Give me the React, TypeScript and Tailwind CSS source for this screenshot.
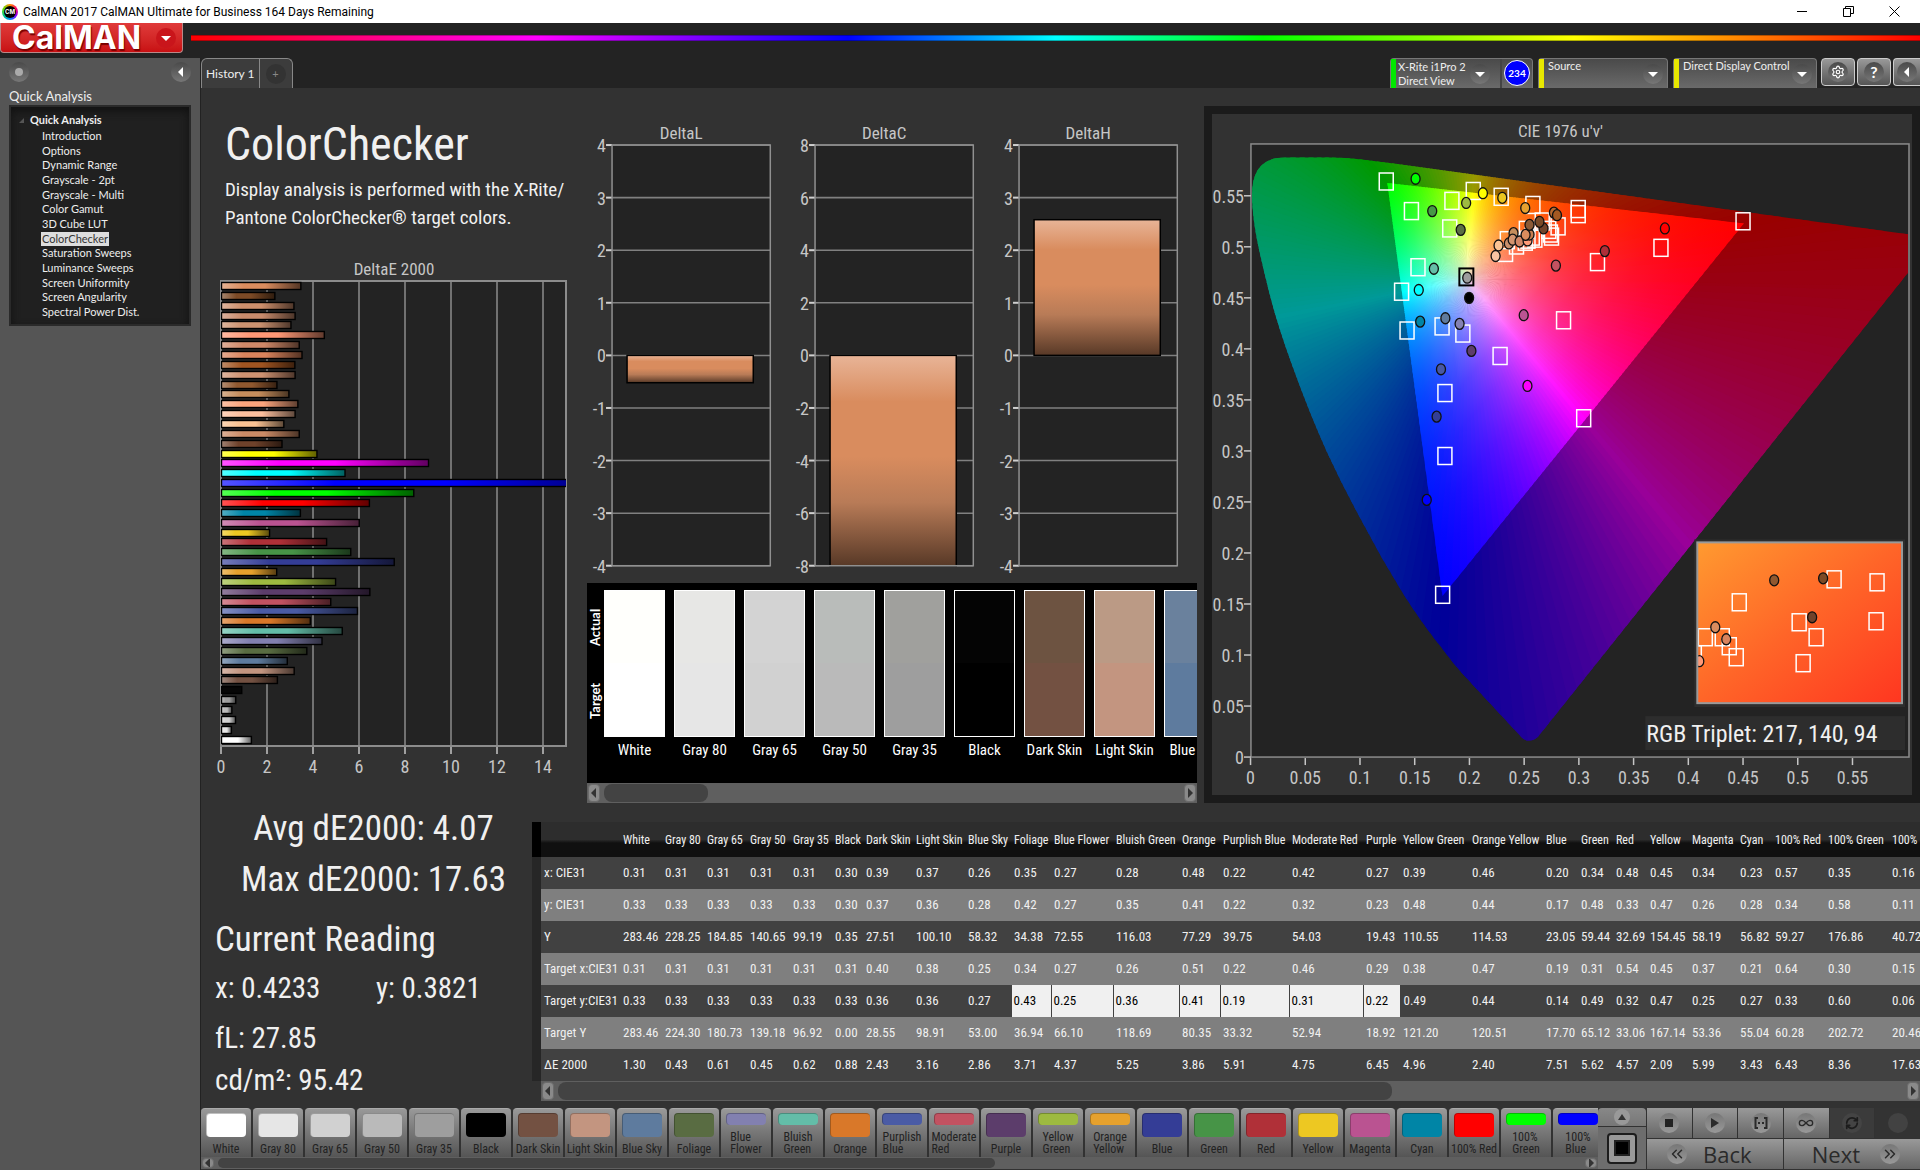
import { ChevronsLeft, ChevronsRight, Infinity as InfinityIcon, RefreshCw, Settings } from 'lucide-react'

interface Patch {
  name: string
  color: string
  actual?: string
  values: string[]
  width: number
}

const patches: Patch[] = [
  { name: 'White', color: '#ffffff', actual: '#fffffc', width: 42, values: ['0.31', '0.33', '283.46', '0.31', '0.33', '283.46', '1.30'] },
  { name: 'Gray 80', color: '#e6e6e6', actual: '#e7e7e5', width: 42, values: ['0.31', '0.33', '228.25', '0.31', '0.33', '224.30', '0.43'] },
  { name: 'Gray 65', color: '#d1d1d1', actual: '#d3d3d3', width: 43, values: ['0.31', '0.33', '184.85', '0.31', '0.33', '180.73', '0.61'] },
  { name: 'Gray 50', color: '#bababa', actual: '#b9bcba', width: 43, values: ['0.31', '0.33', '140.65', '0.31', '0.33', '139.18', '0.45'] },
  { name: 'Gray 35', color: '#9e9e9e', actual: '#a0a09d', width: 42, values: ['0.31', '0.33', '99.19', '0.31', '0.33', '96.92', '0.62'] },
  { name: 'Black', color: '#000000', actual: '#040404', width: 31, values: ['0.30', '0.30', '0.35', '0.31', '0.33', '0.00', '0.88'] },
  { name: 'Dark Skin', color: '#735142', actual: '#6d5341', width: 50, values: ['0.39', '0.37', '27.51', '0.40', '0.36', '28.55', '2.43'] },
  { name: 'Light Skin', color: '#c39580', actual: '#bb9a85', width: 52, values: ['0.37', '0.36', '100.10', '0.38', '0.36', '98.91', '3.16'] },
  { name: 'Blue Sky', color: '#5e7b9e', actual: '#6a819d', width: 46, values: ['0.26', '0.28', '58.32', '0.25', '0.27', '53.00', '2.86'] },
  { name: 'Foliage', color: '#596c42', width: 40, values: ['0.35', '0.42', '34.38', '0.34', '0.43', '36.94', '3.71'] },
  { name: 'Blue Flower', color: '#8280b0', width: 62, values: ['0.27', '0.27', '72.55', '0.27', '0.25', '66.10', '4.37'] },
  { name: 'Bluish Green', color: '#63bda8', width: 66, values: ['0.28', '0.35', '116.03', '0.26', '0.36', '118.69', '5.25'] },
  { name: 'Orange', color: '#d97829', width: 41, values: ['0.48', '0.41', '77.29', '0.51', '0.41', '80.35', '3.86'] },
  { name: 'Purplish Blue', color: '#4a5ba5', width: 69, values: ['0.22', '0.22', '39.75', '0.22', '0.19', '33.32', '5.91'] },
  { name: 'Moderate Red', color: '#c25261', width: 74, values: ['0.42', '0.32', '54.03', '0.46', '0.31', '52.94', '4.75'] },
  { name: 'Purple', color: '#5c3d6b', width: 37, values: ['0.27', '0.23', '19.43', '0.29', '0.22', '18.92', '6.45'] },
  { name: 'Yellow Green', color: '#9dba40', width: 69, values: ['0.39', '0.48', '110.55', '0.38', '0.49', '121.20', '4.96'] },
  { name: 'Orange Yellow', color: '#e6a12d', width: 74, values: ['0.46', '0.44', '114.53', '0.47', '0.44', '120.51', '2.40'] },
  { name: 'Blue', color: '#343d96', width: 35, values: ['0.20', '0.17', '23.05', '0.19', '0.14', '17.70', '7.51'] },
  { name: 'Green', color: '#479447', width: 35, values: ['0.34', '0.48', '59.44', '0.31', '0.49', '65.12', '5.62'] },
  { name: 'Red', color: '#b03038', width: 34, values: ['0.48', '0.33', '32.69', '0.54', '0.32', '33.06', '4.57'] },
  { name: 'Yellow', color: '#edc822', width: 42, values: ['0.45', '0.47', '154.45', '0.45', '0.47', '167.14', '2.09'] },
  { name: 'Magenta', color: '#ba5391', width: 48, values: ['0.34', '0.26', '58.19', '0.37', '0.25', '53.36', '5.99'] },
  { name: 'Cyan', color: '#0085a6', width: 35, values: ['0.23', '0.28', '56.82', '0.21', '0.27', '55.04', '3.43'] },
  { name: '100% Red', color: '#ff0000', width: 53, values: ['0.57', '0.34', '59.27', '0.64', '0.33', '60.28', '6.43'] },
  { name: '100% Green', color: '#00ff00', width: 64, values: ['0.35', '0.58', '176.86', '0.30', '0.60', '202.72', '8.36'] },
  { name: '100% Blue', color: '#0000ff', width: 60, values: ['0.16', '0.11', '40.72', '0.15', '0.06', '20.46', '17.63'] },
]

const rowLabels = ['x: CIE31', 'y: CIE31', 'Y', 'Target x:CIE31', 'Target y:CIE31', 'Target Y', 'ΔE 2000']
const twoLine = ['Blue Flower', 'Bluish Green', 'Purplish Blue', 'Moderate Red', 'Yellow Green', 'Orange Yellow', '100% Green', '100% Blue']

// Patches past the visible part of the table, top of the DeltaE chart first
const skinBars: [number, string][] = [
  [3.45, '#da8c5e'], [2.32, '#7c4a26'], [3.15, '#cd8f6c'], [3.2, '#c98b6c'], [3.02, '#cc9270'], [4.47, '#ff9876'],
  [3.38, '#cf8868'], [3.5, '#d9835c'], [3.19, '#a05421'], [3.2, '#cf9271'], [2.41, '#90582f'], [2.93, '#c58d5c'],
  [3.32, '#fba57d'], [3.2, '#fcbf9e'], [2.71, '#fbc394'], [3.38, '#cb8b66'], [2.63, '#6f422b'], [4.15, '#ffff00'],
  [9, '#ff00ff'], [5.37, '#00ffff'],
]
const deltaEBars: [number, string][] = [
  ...skinBars,
  ...[...patches].reverse().map((p): [number, string] => [Number(p.values[6]), p.color]),
]

const treeItems = [
  'Introduction', 'Options', 'Dynamic Range', 'Grayscale - 2pt', 'Grayscale - Multi', 'Color Gamut', '3D Cube LUT',
  'ColorChecker', 'Saturation Sweeps', 'Luminance Sweeps', 'Screen Uniformity', 'Screen Angularity', 'Spectral Power Dist.',
]

function mix(hex: string, other: number, amount: number) {
  const parts = [1, 3, 5].map((i) => parseInt(hex.slice(i, i + 2), 16))
  return `rgb(${parts.map((p) => Math.round(p * (1 - amount) + other * amount)).join(',')})`
}

function DeltaEChart() {
  const x = (v: number) => 20 + v * 23
  return (
    <svg viewBox="0 0 386 530" className="block w-full h-auto" role="img" aria-label="DeltaE 2000">
      <defs>
        {deltaEBars.map(([, color], i) => (
          <linearGradient id={`bar${i}`} key={i}>
            <stop offset="0" stopColor={mix(color, 255, 0.33)} />
            <stop offset="0.28" stopColor={color} />
            <stop offset="0.55" stopColor={color} />
            <stop offset="1" stopColor={mix(color, 0, 0.62)} />
          </linearGradient>
        ))}
        <clipPath id="deltaEClip"><rect x="20" y="26" width="345" height="466" /></clipPath>
      </defs>
      <text x="193" y="20" textAnchor="middle" fontSize="17" fill="#c6c6c6">DeltaE 2000</text>
      <rect x="20" y="26" width="345" height="465" fill="#232323" stroke="#8c8c8c" strokeWidth="2" />
      {[2, 4, 6, 8, 10, 12, 14].map((v) => (
        <line key={v} x1={x(v)} x2={x(v)} y1="26" y2="491" stroke="#8c8c8c" strokeWidth="1.5" />
      ))}
      <g clipPath="url(#deltaEClip)">
        {deltaEBars.map(([value, color], i) => (
          <rect
            key={i}
            x="20.5"
            y={Math.round(28 + i * 9.86) - 0.5}
            width={value * 23}
            height="7"
            fill={color === '#000000' ? '#060606' : `url(#bar${i})`}
            stroke="#000"
            strokeWidth="1.4"
          />
        ))}
      </g>
      {[0, 2, 4, 6, 8, 10, 12, 14].map((v) => (
        <g key={v}>
          <line x1={x(v)} x2={x(v)} y1="492" y2="499" stroke="#c6c6c6" strokeWidth="1.5" />
          <text x={x(v)} y="518" textAnchor="middle" fontSize="18" fill="#c6c6c6">{v}</text>
        </g>
      ))}
    </svg>
  )
}

interface DeltaChartProps {
  title: string
  step: number
  value: number
}

function DeltaChart({ title, step, value }: DeltaChartProps) {
  const y = (v: number) => 235 - (v / step) * 52.5
  const top = y(Math.max(value, 0))
  const bottom = y(Math.min(value, 0))
  return (
    <svg viewBox="0 0 203 456" className="block w-full h-auto overflow-visible" role="img" aria-label={title}>
      <defs>
        <linearGradient id={title} x2="0" y2="1">
          <stop offset="0" stopColor="#e8b497" />
          <stop offset="0.22" stopColor="#d98c5e" />
          <stop offset="0.48" stopColor="#d98c5e" />
          <stop offset="0.7" stopColor="#b87b57" />
          <stop offset="1" stopColor="#583927" />
        </linearGradient>
      </defs>
      <text x="94" y="19" textAnchor="middle" fontSize="17" fill="#c6c6c6">{title}</text>
      <rect x="25" y="25" width="158" height="420" fill="#232323" />
      {[4, 3, 2, 1, 0, -1, -2, -3, -4].map((n) => (
        <g key={n}>
          <line x1="19" x2="25" y1={y(n * step)} y2={y(n * step)} stroke="#d0d0d0" strokeWidth="2" />
          <line x1="25" x2="183" y1={y(n * step)} y2={y(n * step)} stroke="#808080" strokeWidth="1.5" />
          <text x="19" y={y(n * step) + 7} textAnchor="end" fontSize="18" fill="#c6c6c6">{n * step}</text>
        </g>
      ))}
      <rect x="40" y={top} width="126" height={bottom - top} fill={`url(#${title})`} stroke="#000" strokeWidth="1.5" />
      <rect x="25" y="25" width="158" height="420" fill="none" stroke="#909090" strokeWidth="1.5" />
    </svg>
  )
}

// CIE 1976 chart

const toX = (u: number) => 38.6 + 1096 * u
const toY = (v: number) => 644 - 1022 * v
const WHITE = [0.1978, 0.4683]
const PRIMARIES = [[0.4507, 0.5229], [0.125, 0.5625], [0.1754, 0.1579]]

function uvToRgb(u: number, v: number) {
  const X = (9 * u) / (4 * v)
  const Z = (12 - 3 * u - 20 * v) / (4 * v)
  const rgb = [
    3.2406 * X - 1.5372 - 0.4986 * Z,
    -0.9689 * X + 1.8758 + 0.0415 * Z,
    0.0557 * X - 0.204 + 1.057 * Z,
  ]
  const max = Math.max(...rgb)
  return rgb.map((c) => Math.pow(Math.max(c, 0) / max, 1.15) * 255)
}

// Distance from the white point to the edge of the triangle along a direction
function edgeDistance(du: number, dv: number) {
  let best = Infinity
  PRIMARIES.forEach((a, i) => {
    const b = PRIMARIES[(i + 1) % 3]
    const ex = b[0] - a[0]
    const ey = b[1] - a[1]
    const det = du * ey - dv * ex
    const t = ((a[0] - WHITE[0]) * ey - (a[1] - WHITE[1]) * ex) / det
    if (t > 0 && t < best) best = t
  })
  return best
}

const WEDGES = 240
const STOPS = [0, 0.1, 0.2, 0.35, 0.5, 0.7, 0.85, 0.999]
const css = (rgb: number[], k = 1) => `rgb(${rgb.map((c) => Math.round(c * k)).join(',')})`

const wedges = Array.from({ length: WEDGES }, (_, i) => {
  const a = (i / WEDGES) * Math.PI * 2
  const next = ((i + 1.6) / WEDGES) * Math.PI * 2
  const mid = ((i + 0.5) / WEDGES) * Math.PI * 2
  const cx = toX(WHITE[0])
  const cy = toY(WHITE[1])
  const du = Math.cos(mid) / 1096
  const dv = -Math.sin(mid) / 1022
  const r = edgeDistance(du, dv)
  const colors = STOPS.map((s) => uvToRgb(WHITE[0] + du * r * s, WHITE[1] + dv * r * s))
  return {
    r,
    colors,
    points: `${cx},${cy} ${cx + Math.cos(a) * 900},${cy + Math.sin(a) * 900} ${cx + Math.cos(next) * 900},${cy + Math.sin(next) * 900}`,
  }
})

const targets = [
  [0.124, 0.564], [0.147, 0.535], [0.184, 0.545], [0.2035, 0.5547], [0.182, 0.518], [0.229, 0.549], [0.258, 0.541],
  [0.2994, 0.537], [0.2994, 0.532], [0.281, 0.52], [0.275, 0.51], [0.375, 0.499], [0.45, 0.525], [0.317, 0.485],
  [0.153, 0.48], [0.138, 0.456], [0.143, 0.418], [0.175, 0.422], [0.194, 0.415], [0.228, 0.393], [0.286, 0.428],
  [0.1776, 0.3567], [0.1776, 0.295], [0.3044, 0.332], [0.1755, 0.159], [0.2346, 0.5065], [0.233, 0.494],
  [0.243, 0.5013], [0.252, 0.5166], [0.2535, 0.507], [0.2574, 0.51], [0.2598, 0.508], [0.251, 0.505],
  [0.2665, 0.5248], [0.2725, 0.5166], [0.274, 0.513],
]

const measured: [number, number, string][] = [
  [0.1508, 0.5667, '#00ff00'], [0.166, 0.535, '#469a46'], [0.197, 0.543, '#9eba40'], [0.192, 0.5166, '#5b6f43'],
  [0.2123, 0.5525, '#ffff00'], [0.23, 0.548, '#ebc720'], [0.251, 0.538, '#e7a12f'], [0.2772, 0.5335, '#b9692f'],
  [0.28, 0.531, '#a45922'], [0.3786, 0.518, '#ff0000'], [0.3237, 0.4958, '#af2f38'], [0.279, 0.4816, '#c35260'],
  [0.1675, 0.4785, '#65bfa8'], [0.1537, 0.4577, '#00ffff'], [0.155, 0.4267, '#0085a6'], [0.178, 0.43, '#5f7b9e'],
  [0.191, 0.4245, '#8481b2'], [0.2018, 0.398, '#5e3d6c'], [0.174, 0.38, '#4858a4'], [0.2496, 0.433, '#bb5493'],
  [0.253, 0.3637, '#ff00ff'], [0.17, 0.3336, '#333e96'], [0.161, 0.252, '#0000ff'], [0.1997, 0.45, '#000000'],
  [0.198, 0.4697, '#9d9d9d'], [0.2266, 0.5013, '#fbc394'], [0.2239, 0.491, '#f8c3a2'], [0.2403, 0.5134, '#c58d5c'],
  [0.236, 0.5033, '#c98f6c'], [0.2395, 0.507, '#d3946f'], [0.2458, 0.5052, '#d28767'], [0.2531, 0.5062, '#fe9b78'],
  [0.2549, 0.512, '#c77d50'], [0.2513, 0.5117, '#d98c5e'], [0.2549, 0.5215, '#8b5a36'], [0.2677, 0.518, '#70432a'],
  [0.264, 0.5245, '#7a4b28'],
]

const insetTargets = [
  [528, 489], [588, 509], [605, 524], [592, 550], [623, 466], [666, 469], [665, 508], [494, 524], [511, 524],
  [518, 533], [525, 544], [483, 541],
]
const insetMeasured: [number, number, string][] = [
  [504, 514, '#d98c5e'], [515, 526, '#d9835c'], [488, 548, '#ff9876'], [563, 467, '#90582f'], [612, 465, '#7c4a26'],
  [601, 504, '#6f422b'],
]

function TargetBox({ x, y, color = '#fff' }: { x: number; y: number; color?: string }) {
  return <rect x={x - 7} y={y - 8.5} width="14" height="17" fill="none" stroke={color} strokeWidth="1.5" />
}

function Dot({ x, y, color }: { x: number; y: number; color: string }) {
  return <ellipse cx={x} cy={y} rx="4.5" ry="5.5" fill={color} stroke="#111" strokeWidth="1.3" />
}

function CieChart() {
  const ticks = Array.from({ length: 12 }, (_, i) => i * 0.05)
  return (
    <svg viewBox="0 0 701 682" className="block w-full h-auto" role="img" aria-label="CIE 1976 u'v'">
      <defs>
        <clipPath id="locus">
          <path d="M40 83 C40 68 43 58 49 52 C55 46 62 43.5 74 43.5 L118 43.5 C140 43.5 160 47 182 49.5 L697 120.5 V159 L326.5 623.7 Q318 631 310.4 624.6 L259.9 570.2 C248 558 240 548 232.3 537.6 Q210 510 191 479.7 Q169 444 149.7 407 Q132 375 115.3 339 Q97 298 80.8 253 Q63 205 53.3 162.6 C46 132 41 110 40 83 Z" />
        </clipPath>
        <clipPath id="gamut">
          <polygon points={PRIMARIES.map(([u, v]) => `${toX(u)},${toY(v)}`).join(' ')} />
        </clipPath>
        <clipPath id="insetClip"><rect x="486" y="429" width="205" height="161" /></clipPath>
        {wedges.map((w, i) => (
          <radialGradient key={i} id={`w${i}`} gradientUnits="userSpaceOnUse" cx={toX(WHITE[0])} cy={toY(WHITE[1])} r={w.r}>
            {STOPS.map((s, j) => <stop key={s} offset={s} stopColor={css(w.colors[j])} />)}
          </radialGradient>
        ))}
        <linearGradient id="insetBase" x1="0" y1="0" x2="1" y2="1">
          <stop offset="0" stopColor="#ff9a30" />
          <stop offset="0.5" stopColor="#ff6528" />
          <stop offset="1" stopColor="#ff3620" />
        </linearGradient>
      </defs>
      <text x="349" y="23" textAnchor="middle" fontSize="17" fill="#c6c6c6">CIE 1976 u'v'</text>
      <rect x="39" y="30" width="659" height="614" fill="#232323" stroke="#8c8c8c" strokeWidth="1.5" />
      <g clipPath="url(#locus)">
        {wedges.map((w, i) => <polygon key={i} points={w.points} fill={css(w.colors[7], 0.6)} />)}
      </g>
      <g clipPath="url(#gamut)">
        {wedges.map((w, i) => <polygon key={i} points={w.points} fill={`url(#w${i})`} />)}
      </g>

      {ticks.map((t) => (
        <g key={t} fontSize="18" fill="#c6c6c6" stroke="none">
          <line x1="32" x2="39" y1={toY(t)} y2={toY(t)} stroke="#c6c6c6" strokeWidth="1.5" />
          <text x="32" y={toY(t) + 7} textAnchor="end">{Number(t.toFixed(2))}</text>
          <line x1={toX(t)} x2={toX(t)} y1="645" y2="652" stroke="#c6c6c6" strokeWidth="1.5" />
          <text x={toX(t)} y="671" textAnchor="middle">{Number(t.toFixed(2))}</text>
        </g>
      ))}

      {targets.map(([u, v], i) => <TargetBox key={i} x={toX(u)} y={toY(v)} />)}
      <rect x={toX(0.1972) - 7} y={toY(0.47) - 9} width="14" height="17" fill="none" stroke="#000" strokeWidth="2" />
      {measured.map(([u, v, color], i) => <Dot key={i} x={toX(u)} y={toY(v)} color={color} />)}

      <rect x="483" y="426" width="211" height="168" fill="#2d2d2d" />
      <g clipPath="url(#insetClip)">
        <rect x="486" y="429" width="205" height="161" fill="url(#insetBase)" />
        {insetTargets.map(([x, y], i) => <TargetBox key={i} x={x} y={y} />)}
        {insetMeasured.map(([x, y, color], i) => <Dot key={i} x={x} y={y} color={color} />)}
      </g>
      <rect x="486" y="429" width="205" height="161" fill="none" stroke="#999" strokeWidth="2" />

      <rect x="434" y="603" width="260" height="34" fill="#2d2d2d" />
      <text x="435" y="629" fontSize="24" fill="#f0f0f0">RGB Triplet: 217, 140, 94</text>
    </svg>
  )
}

// Window chrome and controls

function Triangle({ d }: { d: string }) {
  return (
    <svg width="10" height="10" viewBox="0 0 10 10" fill="currentColor" aria-hidden="true">
      <path d={d} />
    </svg>
  )
}
const DOWN = 'M0 3h10L5 8z'
const LEFT = 'M7 0v10L2 5z'
const RIGHT = 'M3 0v10l5-5z'
const UP = 'M1 8h8L5 2z'

function Round({ children }: { children?: React.ReactNode }) {
  return (
    <span className="flex size-5 shrink-0 items-center justify-center rounded-full bg-linear-to-b from-[#4a4a4a] to-[#777] text-white">
      {children}
    </span>
  )
}

function ScrollBar({ thumb, label, slim }: { thumb: string; label: string; slim?: boolean }) {
  const arrow = 'flex w-3 shrink-0 items-center justify-center rounded-sm border border-[#6c6c6c] bg-[#8a8a8a] text-[#333] overflow-hidden'
  return (
    <div className={`flex gap-1 bg-[#5f5f5f] p-px ${slim ? 'h-3' : 'h-5'}`} role="group" aria-label={label}>
      <button type="button" className={arrow} aria-label="Scroll left"><Triangle d={LEFT} /></button>
      <div className="flex-1">
        <div className="h-full rounded-lg bg-[#434343]" style={{ width: thumb }} />
      </div>
      <button type="button" className={arrow} aria-label="Scroll right"><Triangle d={RIGHT} /></button>
    </div>
  )
}

function TitleBar() {
  return (
    <div className="flex h-[23px] items-center bg-white text-black">
      <span className="ml-0.5 flex size-4 items-center justify-center rounded-full bg-[conic-gradient(#f80,#f06,#80f,#08f,#0c8,#6d0,#f80)]">
        <span className="flex size-3 items-center justify-center rounded-full bg-black font-['Inter',sans-serif] text-[6px] font-bold text-white">CM</span>
      </span>
      <span className="ml-[5px] font-['Roboto',sans-serif] text-xs">CalMAN 2017 CalMAN Ultimate for Business 164 Days Remaining</span>
      <div className="ml-auto flex gap-[35px] pr-5">
        <button type="button" aria-label="Minimize">
          <svg width="11" height="11" stroke="currentColor" fill="none"><path d="M0 5.5h10" /></svg>
        </button>
        <button type="button" aria-label="Restore">
          <svg width="11" height="11" stroke="currentColor" fill="none"><path d="M.5 2.5h7v8h-7zM2.5 2.5v-2h8v7h-3" /></svg>
        </button>
        <button type="button" aria-label="Close">
          <svg width="11" height="11" stroke="currentColor" fill="none"><path d="M.5.5l10 10M10.5.5l-10 10" /></svg>
        </button>
      </div>
    </div>
  )
}

function Header() {
  return (
    <header className="flex h-[35px] items-start gap-2 bg-[#232323]">
      <button
        type="button"
        className="flex h-[30px] w-[183px] shrink-0 items-center justify-between rounded-b border border-t-0 border-[#b88] bg-linear-to-b from-[#e03a3a] to-[#c80f12] pl-[11px] pr-1.5"
      >
        <span className="font-['Inter',sans-serif] text-[32px] leading-7 font-bold text-white [text-shadow:1px_2px_1px_#7a0000]">CalMAN</span>
        <span className="flex size-5 items-center justify-center rounded-full bg-[#c9151b] text-white"><Triangle d={DOWN} /></span>
      </button>
      <div className="mt-3 h-1.5 flex-1 border-y border-black/30 bg-[linear-gradient(90deg,#f00,#f0f_20%,#00f_38%,#0ff_50%,#0f0_62%,#ff0_80%,#f00)]" />
    </header>
  )
}

function Sidebar() {
  return (
    <aside className="w-[200px] shrink-0 bg-[#555] px-[9px] font-['Lato',sans-serif] text-[#eee]">
      <div className="flex h-7 items-center justify-between">
        <span className="flex size-5 items-center justify-center rounded-full bg-linear-to-b from-[#4a4a4a] to-[#777]">
          <span className="size-2 rounded-full bg-[#aaa]" />
        </span>
        <button type="button" aria-label="Collapse sidebar"><Round><Triangle d={LEFT} /></Round></button>
      </div>
      <h2 className="mt-0.5 text-[13px] leading-[17px]">Quick Analysis</h2>
      <nav className="h-[221px] border-2 border-[#2a2a2a] bg-[#202020] pt-[5px] text-[11px] shadow-[inset_0_4px_8px_#111]">
        <div className="flex h-4 items-center gap-1.5 pl-2 font-bold">
          <svg width="5" height="5" fill="#555"><path d="M5 0v5H0z" /></svg>
          Quick Analysis
        </div>
        <ul className="flex h-[191px] flex-col justify-between pt-px pl-[30px]">
          {treeItems.map((item) => (
            <li key={item} className="leading-[14px]">
              <a
                href="#"
                className={item === 'ColorChecker' ? 'inline-block bg-[#ddd] px-px leading-[14px] text-[#333]' : 'inline-block px-px leading-[14px]'}
              >
                {item}
              </a>
            </li>
          ))}
        </ul>
      </nav>
    </aside>
  )
}

function TopTabs() {
  const box = 'flex h-[30px] shrink-0 rounded-t border border-b-0 border-[#777] bg-linear-to-b from-[#4a4a4a] to-[#6a6a6a] text-left whitespace-nowrap'
  const square = 'flex h-7 shrink-0 items-center justify-center rounded border border-[#ccc] bg-linear-to-b from-[#999] to-[#555] text-white'
  return (
    <div className="flex h-[30px] bg-[#232323] font-['Lato',sans-serif] text-[11px] leading-[14px] text-[#eee]">
      <div className="flex rounded-t-md border border-b-0 border-[#888] bg-[#3c3c3c]">
        <button type="button" className="border-r border-[#888] px-1 text-xs">History 1</button>
        <button type="button" className="px-1.5" aria-label="Add history tab">
          <span className="flex size-5 items-center justify-center rounded-full bg-[#333] text-[#888]">+</span>
        </button>
      </div>
      <div className="ml-auto flex gap-[5px]">
        <div className={`${box} w-[143px]`}>
          <span className="w-[5px] bg-[#00e800]" />
          <button type="button" className="flex flex-1 items-center justify-between border-r-2 border-[#444] pl-0.5 pr-2.5 text-left">
            <span>X-Rite i1Pro 2<br />Direct View</span>
            <Round><Triangle d={DOWN} /></Round>
          </button>
          <span className="mx-[2px] mt-px flex size-[26px] items-center justify-center rounded-full border border-white bg-[#0000ff] text-[10px] font-bold text-white">234</span>
        </div>
        <button type="button" className={`${box} w-[130px]`}>
          <span className="h-full w-[5px] bg-[#e8e800]" />
          <span className="flex-1 pl-1">Source</span>
          <span className="self-center pr-1"><Round><Triangle d={DOWN} /></Round></span>
        </button>
        <button type="button" className={`${box} w-[144px]`}>
          <span className="h-full w-[5px] bg-[#e8e800]" />
          <span className="flex-1 pl-1">Direct Display Control</span>
          <span className="self-center pr-1"><Round><Triangle d={DOWN} /></Round></span>
        </button>
      </div>
      <div className="ml-1 flex gap-0.5">
        <button type="button" className={`${square} w-[34px]`} aria-label="Settings"><Round><Settings className="size-3.5" /></Round></button>
        <button type="button" className={`${square} w-[34px]`} aria-label="Help"><Round><span className="text-base font-bold">?</span></Round></button>
        <button type="button" className={`${square} w-[27px] rounded-r-none border-r-0`} aria-label="Collapse panel"><Round><Triangle d={LEFT} /></Round></button>
      </div>
    </div>
  )
}

function ComparisonStrip() {
  return (
    <section className="mr-[7px]">
      <div className="flex h-[200px] bg-black pt-[7px] text-sm text-white">
        <div className="flex h-[147px] w-[17px] shrink-0 rotate-180 justify-around font-['Lato',sans-serif] text-[13px] leading-[17px] font-bold [writing-mode:vertical-rl]">
          <span>Target</span>
          <span>Actual</span>
        </div>
        <div className="flex flex-1 gap-[9px] overflow-hidden">
          {patches.slice(0, 9).map((p) => (
            <div key={p.name} className="w-[61px] shrink-0 text-center">
              <div className="flex h-[147px] flex-col border border-white">
                <div className="flex-1" style={{ backgroundColor: p.actual }} />
                <div className="flex-1" style={{ backgroundColor: p.color }} />
              </div>
              <div className="mt-0.5 text-[15px] leading-[22px] whitespace-nowrap">{p.name}</div>
            </div>
          ))}
        </div>
      </div>
      <ScrollBar thumb="18%" label="Swatch scroll" />
    </section>
  )
}

function Stats() {
  return (
    <section className="w-[331px] shrink-0 pl-3.5 text-[#f0f0f0]">
      <div className="text-center text-[35px] leading-[51px]">
        <p>Avg dE2000: 4.07</p>
        <p>Max dE2000: 17.63</p>
      </div>
      <h2 className="mt-2 text-[35px] leading-[54px]">Current Reading</h2>
      <div className="text-[29px]">
        <div className="flex leading-[42px]">
          <p className="w-[161px]">x: 0.4233</p>
          <p>y: 0.3821</p>
        </div>
        <p className="mt-2 leading-[42px]">fL: 27.85</p>
        <p className="leading-[42px]">cd/m²: 95.42</p>
      </div>
    </section>
  )
}

function DataTable() {
  const total = patches.reduce((sum, p) => sum + p.width, 88)
  return (
    <section className="mt-[19px] min-w-0 flex-1">
      <div className="overflow-hidden">
        <table className="table-fixed border-collapse text-left text-[13px] text-[#f0f0f0]" style={{ width: total }}>
          <colgroup>
            <col style={{ width: 9 }} />
            <col style={{ width: 79 }} />
            {patches.map((p) => <col key={p.name} style={{ width: p.width }} />)}
          </colgroup>
          <thead>
            <tr className="h-[35px] bg-linear-to-b from-[#2d2d2d] from-50% to-[#101010] to-60% text-xs">
              <th className="bg-black" />
              <th />
              {patches.map((p) => (
                <th key={p.name} scope="col" className="p-0 pl-[3px] font-normal whitespace-nowrap">{p.name}</th>
              ))}
            </tr>
          </thead>
          <tbody>
            {rowLabels.map((label, row) => (
              <tr key={label} className={row % 2 ? 'h-8 bg-[#7f7f7f]' : 'h-8 bg-[#414141]'}>
                <td className="bg-[#262626]" />
                <th scope="row" className="p-0 pl-[3px] font-normal whitespace-nowrap">{label}</th>
                {patches.map((p, col) => (
                  <td
                    key={p.name}
                    className={row === 4 && col >= 9 && col <= 15 ? 'border-x border-[#414141] bg-[#f0f0f0] p-0 pl-0.5 text-black' : 'p-0 pl-[3px]'}
                  >
                    {p.values[row]}
                  </td>
                ))}
              </tr>
            ))}
          </tbody>
        </table>
      </div>
      <div className="pl-[9px]"><ScrollBar thumb="62%" label="Table scroll" /></div>
    </section>
  )
}

function PatchBar() {
  return (
    <div className="min-w-0 flex-1">
      <div className="flex h-[49px] gap-0.5 overflow-hidden">
        {patches.map((p) => {
          const wrap = twoLine.includes(p.name)
          return (
            <button
              type="button"
              key={p.name}
              className="flex w-[50px] shrink-0 flex-col items-center justify-between rounded-t border-t border-[#aaa] bg-linear-to-b from-[#999] to-[#555] pt-1 pb-0.5 text-xs leading-3 text-[#222]"
            >
              <span
                className={wrap ? 'h-3 w-10 rounded-sm border-t border-l border-black/25' : 'h-6 w-10 rounded-sm border-t border-l border-black/25'}
                style={{ backgroundColor: p.color }}
              />
              <span className={wrap ? 'text-left' : 'whitespace-nowrap'}>
                {wrap ? <>{p.name.split(' ')[0]}<br />{p.name.split(' ')[1]}</> : p.name}
              </span>
            </button>
          )
        })}
      </div>
      <ScrollBar thumb="57%" label="Patch scroll" slim />
    </div>
  )
}

function Transport() {
  const cell = 'flex flex-1 items-center bg-linear-to-b from-[#999] to-[#666] text-[#2a2a2a]'
  const knob = 'flex size-5 items-center justify-center rounded-full bg-linear-to-b from-[#777] to-[#999]'
  return (
    <div className="flex w-[322px] shrink-0 gap-px">
      <div className="flex w-12 flex-col gap-px">
        <button type="button" className="flex h-[18px] items-center justify-center rounded-t bg-linear-to-b from-[#888] to-[#777]" aria-label="Expand">
          <span className="flex size-4 items-center justify-center rounded-full bg-[#999] text-[#333]"><Triangle d={UP} /></span>
        </button>
        <button type="button" className="flex flex-1 items-center justify-center bg-[#6d6d6d]" aria-label="Pattern window">
          <span className="flex h-[31px] w-[30px] items-center justify-center rounded border-2 border-[#1c1c1c] bg-[#999]">
            <span className="size-4 border-2 border-[#222] bg-black" />
          </span>
        </button>
      </div>
      <div className="flex flex-1 flex-col gap-px">
        <div className="flex h-[30px] gap-px">
          <button type="button" className={`${cell} justify-center`} aria-label="Stop"><span className={knob}><span className="size-2 bg-[#222]" /></span></button>
          <button type="button" className={`${cell} justify-center`} aria-label="Play"><span className={knob}><Triangle d="M1 0v10l8-5z" /></span></button>
          <button type="button" className={`${cell} justify-center`} aria-label="Read series">
            <span className={knob}>
              <svg width="14" height="12" fill="none" stroke="currentColor" strokeWidth="2">
                <path d="M4 1H1.500v10H4M10 1h2.500v10H10" />
                <path d="M4 6h2M8 6h2" />
              </svg>
            </span>
          </button>
          <button type="button" className={`${cell} justify-center`} aria-label="Continuous"><span className={knob}><InfinityIcon className="size-4" /></span></button>
          <button type="button" className="flex flex-1 items-center justify-center bg-[#3b3b3b] text-[#1c1c1c]" aria-label="Refresh">
            <span className="flex size-5 items-center justify-center rounded-full bg-[#444]"><RefreshCw className="size-3.5" strokeWidth={3} /></span>
          </button>
          <button type="button" className="flex flex-1 items-center justify-center bg-[#333]" aria-label="Record">
            <span className="size-5 rounded-full bg-[#424242]" />
          </button>
        </div>
        <div className="flex flex-1 gap-px font-['Open_Sans',sans-serif] text-[22px] leading-[30px] font-medium">
          <button type="button" className={`${cell} gap-4 pl-5`}><span className={knob}><ChevronsLeft className="size-[18px]" /></span>Back</button>
          <button type="button" className={`${cell} justify-end gap-5 pr-5`}>Next<span className={knob}><ChevronsRight className="size-[18px]" /></span></button>
        </div>
      </div>
    </div>
  )
}

export default function App() {
  return (
    <div className="flex min-h-screen flex-col bg-[#232323] font-['Roboto_Condensed','Open_Sans_Condensed','Noto_Sans_Condensed','Lato',sans-serif]">
      <TitleBar />
      <Header />
      <div className="flex flex-1">
        <Sidebar />
        <div className="flex min-w-0 flex-1 flex-col border-l border-[#222] bg-[#323232]">
          <TopTabs />
          <main className="flex flex-1 flex-col">
            <div className="grid grid-cols-[minmax(0,386fr)_minmax(0,617fr)_minmax(0,716fr)] items-start">
              <section className="pt-6">
                <div className="pl-6 text-[#f0f0f0]">
                  <h1 className="text-[46px] leading-[64px]">ColorChecker</h1>
                  <p className="text-[19px] leading-7 whitespace-nowrap">
                    Display analysis is performed with the X-Rite/<br />Pantone ColorChecker® target colors.
                  </p>
                </div>
                <div className="pt-[23px]"><DeltaEChart /></div>
              </section>
              <section className="pt-8">
                <div className="grid grid-cols-3 pr-[7px] pb-1.5">
                  <DeltaChart title="DeltaL" step={1} value={-0.52} />
                  <DeltaChart title="DeltaC" step={2} value={-8} />
                  <DeltaChart title="DeltaH" step={1} value={2.58} />
                </div>
                <ComparisonStrip />
              </section>
              <section className="mt-[18px] border-8 border-[#1b1b1b]">
                <CieChart />
              </section>
            </div>
            <div className="flex items-start">
              <Stats />
              <DataTable />
            </div>
            <footer className="mt-auto flex pb-px">
              <PatchBar />
              <Transport />
            </footer>
          </main>
        </div>
      </div>
    </div>
  )
}
